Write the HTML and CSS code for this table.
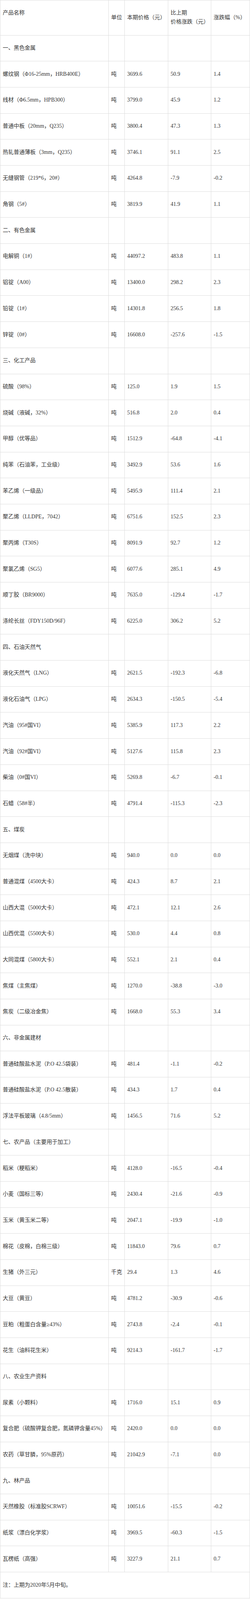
FILE: index.html
```html
<!DOCTYPE html>
<html lang="zh-CN">
<head>
<meta charset="utf-8">
<title>流通领域重要生产资料市场价格变动情况</title>
<link rel="stylesheet" href="styles.css">
</head>
<body>
<table class="price-table">
  <colgroup>
    <col class="col-name">
    <col class="col-unit">
    <col class="col-price">
    <col class="col-change">
    <col class="col-pct">
  </colgroup>
  <tbody>
    <tr class="head-row">
      <td class="cell-top">产品名称</td>
      <td>单位</td>
      <td>本期价格（元）</td>
      <td>比上期<br>价格涨跌（元）</td>
      <td>涨跌幅（%）</td>
    </tr>
    <tr><td>一、黑色金属</td><td></td><td></td><td></td><td></td></tr>
    <tr><td>螺纹钢（Φ16-25mm，HRB400E）</td><td>吨</td><td>3699.6</td><td>50.9</td><td>1.4</td></tr>
    <tr><td>线材（Φ6.5mm，HPB300）</td><td>吨</td><td>3799.0</td><td>45.9</td><td>1.2</td></tr>
    <tr><td>普通中板（20mm，Q235）</td><td>吨</td><td>3800.4</td><td>47.3</td><td>1.3</td></tr>
    <tr><td>热轧普通薄板（3mm，Q235）</td><td>吨</td><td>3746.1</td><td>91.1</td><td>2.5</td></tr>
    <tr><td>无缝钢管（219*6，20#）</td><td>吨</td><td>4264.8</td><td>-7.9</td><td>-0.2</td></tr>
    <tr><td>角钢（5#）</td><td>吨</td><td>3819.9</td><td>41.9</td><td>1.1</td></tr>
    <tr><td>二、有色金属</td><td></td><td></td><td></td><td></td></tr>
    <tr><td>电解铜（1#）</td><td>吨</td><td>44097.2</td><td>483.8</td><td>1.1</td></tr>
    <tr><td>铝锭（A00）</td><td>吨</td><td>13400.0</td><td>298.2</td><td>2.3</td></tr>
    <tr><td>铅锭（1#）</td><td>吨</td><td>14301.8</td><td>256.5</td><td>1.8</td></tr>
    <tr><td>锌锭（0#）</td><td>吨</td><td>16608.0</td><td>-257.6</td><td>-1.5</td></tr>
    <tr><td>三、化工产品</td><td></td><td></td><td></td><td></td></tr>
    <tr><td>硫酸（98%）</td><td>吨</td><td>125.0</td><td>1.9</td><td>1.5</td></tr>
    <tr><td>烧碱（液碱，32%）</td><td>吨</td><td>516.8</td><td>2.0</td><td>0.4</td></tr>
    <tr><td>甲醇（优等品）</td><td>吨</td><td>1512.9</td><td>-64.8</td><td>-4.1</td></tr>
    <tr><td>纯苯（石油苯，工业级）</td><td>吨</td><td>3492.9</td><td>53.6</td><td>1.6</td></tr>
    <tr><td>苯乙烯（一级品）</td><td>吨</td><td>5495.9</td><td>111.4</td><td>2.1</td></tr>
    <tr><td>聚乙烯（LLDPE，7042）</td><td>吨</td><td>6751.6</td><td>152.5</td><td>2.3</td></tr>
    <tr><td>聚丙烯（T30S）</td><td>吨</td><td>8091.9</td><td>92.7</td><td>1.2</td></tr>
    <tr><td>聚氯乙烯（SG5）</td><td>吨</td><td>6077.6</td><td>285.1</td><td>4.9</td></tr>
    <tr><td>顺丁胶（BR9000）</td><td>吨</td><td>7635.0</td><td>-129.4</td><td>-1.7</td></tr>
    <tr><td>涤纶长丝（FDY150D/96F）</td><td>吨</td><td>6225.0</td><td>306.2</td><td>5.2</td></tr>
    <tr><td>四、石油天然气</td><td></td><td></td><td></td><td></td></tr>
    <tr><td>液化天然气（LNG）</td><td>吨</td><td>2621.5</td><td>-192.3</td><td>-6.8</td></tr>
    <tr><td>液化石油气（LPG）</td><td>吨</td><td>2634.3</td><td>-150.5</td><td>-5.4</td></tr>
    <tr><td>汽油（95#国VI）</td><td>吨</td><td>5385.9</td><td>117.3</td><td>2.2</td></tr>
    <tr><td>汽油（92#国VI）</td><td>吨</td><td>5127.6</td><td>115.8</td><td>2.3</td></tr>
    <tr><td>柴油（0#国VI）</td><td>吨</td><td>5269.8</td><td>-6.7</td><td>-0.1</td></tr>
    <tr><td>石蜡（58#半）</td><td>吨</td><td>4791.4</td><td>-115.3</td><td>-2.3</td></tr>
    <tr><td>五、煤炭</td><td></td><td></td><td></td><td></td></tr>
    <tr><td>无烟煤（洗中块）</td><td>吨</td><td>940.0</td><td>0.0</td><td>0.0</td></tr>
    <tr><td>普通混煤（4500大卡）</td><td>吨</td><td>424.3</td><td>8.7</td><td>2.1</td></tr>
    <tr><td>山西大混（5000大卡）</td><td>吨</td><td>472.1</td><td>12.1</td><td>2.6</td></tr>
    <tr><td>山西优混（5500大卡）</td><td>吨</td><td>530.0</td><td>4.4</td><td>0.8</td></tr>
    <tr><td>大同混煤（5800大卡）</td><td>吨</td><td>552.1</td><td>2.1</td><td>0.4</td></tr>
    <tr><td>焦煤（主焦煤）</td><td>吨</td><td>1270.0</td><td>-38.8</td><td>-3.0</td></tr>
    <tr><td>焦炭（二级冶金焦）</td><td>吨</td><td>1668.0</td><td>55.3</td><td>3.4</td></tr>
    <tr><td>六、非金属建材</td><td></td><td></td><td></td><td></td></tr>
    <tr><td>普通硅酸盐水泥（P.O 42.5袋装）</td><td>吨</td><td>481.4</td><td>-1.1</td><td>-0.2</td></tr>
    <tr><td>普通硅酸盐水泥（P.O 42.5散装）</td><td>吨</td><td>434.3</td><td>1.7</td><td>0.4</td></tr>
    <tr><td>浮法平板玻璃（4.8/5mm）</td><td>吨</td><td>1456.5</td><td>71.6</td><td>5.2</td></tr>
    <tr><td>七、农产品（主要用于加工）</td><td></td><td></td><td></td><td></td></tr>
    <tr><td>稻米（粳稻米）</td><td>吨</td><td>4128.0</td><td>-16.5</td><td>-0.4</td></tr>
    <tr><td>小麦（国标三等）</td><td>吨</td><td>2430.4</td><td>-21.6</td><td>-0.9</td></tr>
    <tr><td>玉米（黄玉米二等）</td><td>吨</td><td>2047.1</td><td>-19.9</td><td>-1.0</td></tr>
    <tr><td>棉花（皮棉，白棉三级）</td><td>吨</td><td>11843.0</td><td>79.6</td><td>0.7</td></tr>
    <tr><td>生猪（外三元）</td><td>千克</td><td>29.4</td><td>1.3</td><td>4.6</td></tr>
    <tr><td>大豆（黄豆）</td><td>吨</td><td>4781.2</td><td>-30.9</td><td>-0.6</td></tr>
    <tr><td>豆粕（粗蛋白含量≥43%）</td><td>吨</td><td>2743.8</td><td>-2.4</td><td>-0.1</td></tr>
    <tr><td>花生（油料花生米）</td><td>吨</td><td>9214.3</td><td>-161.7</td><td>-1.7</td></tr>
    <tr><td>八、农业生产资料</td><td></td><td></td><td></td><td></td></tr>
    <tr><td>尿素（小颗料）</td><td>吨</td><td>1716.0</td><td>15.1</td><td>0.9</td></tr>
    <tr><td>复合肥（硫酸钾复合肥，氮磷钾含量45%）</td><td>吨</td><td>2420.0</td><td>0.0</td><td>0.0</td></tr>
    <tr><td>农药（草甘膦，95%原药）</td><td>吨</td><td>21042.9</td><td>-7.1</td><td>0.0</td></tr>
    <tr><td>九、林产品</td><td></td><td></td><td></td><td></td></tr>
    <tr><td>天然橡胶（标准胶SCRWF）</td><td>吨</td><td>10051.6</td><td>-15.5</td><td>-0.2</td></tr>
    <tr><td>纸浆（漂白化学浆）</td><td>吨</td><td>3969.5</td><td>-60.3</td><td>-1.5</td></tr>
    <tr><td>瓦楞纸（高强）</td><td>吨</td><td>3227.9</td><td>21.1</td><td>0.7</td></tr>
    <tr><td colspan="5">注：上期为2020年5月中旬。</td></tr>
  </tbody>
</table>
</body>
</html>
```

FILE: styles.css
```css
html,
body {
  margin: 0;
  padding: 0;
  background: #ffffff;
}

body {
  font-family: "Liberation Serif", "Noto Sans CJK SC", serif;
  font-size: 14px;
  color: #333333;
}

.price-table {
  border-collapse: separate;
  border-spacing: 0;
  table-layout: fixed;
  width: 639px;
  border-top: 1px solid #dddddd;
  border-left: 1px solid #dddddd;
}

.col-name { width: 277px; }
.col-unit { width: 41px; }
.col-price { width: 111px; }
.col-change { width: 110px; }
.col-pct { width: 99px; }

.price-table td {
  border-right: 1px solid #dddddd;
  border-bottom: 1px solid #dddddd;
  padding: 21.4px 6px;
  line-height: 22.9px;
  vertical-align: middle;
  text-align: left;
  white-space: nowrap;
  overflow: hidden;
}

.price-table td.cell-top {
  vertical-align: top;
}
```
